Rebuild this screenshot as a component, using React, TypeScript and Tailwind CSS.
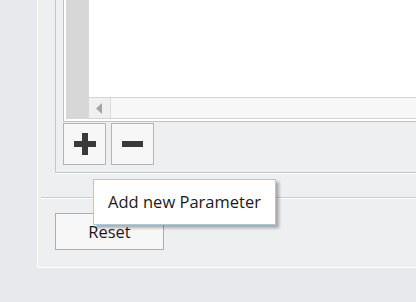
import React from 'react';

// Parameter-Editor Ausschnitt: Liste, +/- Buttons, Tooltip, Reset
export default function App() {
  const font = { fontFamily: '"Open Sans", "Noto Sans", sans-serif' };

  return (
    <div className="relative w-[416px] h-[302px] overflow-hidden bg-[#e8e9ec]" style={font}>
      {/* Panel */}
      <div className="ml-[37px] w-[379px] h-[268px] bg-[#eeeff1] border-l border-b border-white flex flex-col">
        {/* Group box */}
        <div className="ml-[17px] w-[400px] h-[173px] border-l border-b border-[#c6c6c6] flex flex-col pl-[7px]">
          {/* List box */}
          <div className="h-[122px] w-[400px] bg-white border-l border-b border-[#c2c2c2] flex pl-[2px] pb-[2px]">
            <div className="w-[23px] h-full bg-[#d7d7d7]" />
            <div className="flex-1 flex flex-col">
              <div className="flex-1 bg-white" />
              <div className="h-[22px] flex border-t border-b border-[#d4d4d4] bg-[#f7f7f7]">
                <div className="w-[22px] h-full bg-[#f0f0f0] border-r border-[#dadada] flex items-center justify-center">
                  <svg width="7" height="11" viewBox="0 0 7 11">
                    <polygon points="6,0 6,11 0,5.5" fill="#a4a4a4" />
                  </svg>
                </div>
                <div className="flex-1" />
              </div>
            </div>
          </div>
          {/* Toolbar */}
          <div className="flex gap-[5px] mt-[1px]">
            <button className="w-[43px] h-[42px] bg-[#f7f7f7] border border-[#b4b4b4] flex items-center justify-center">
              <svg width="22" height="22" viewBox="0 0 22 22">
                <rect x="8" y="0" width="6" height="22" fill="#3a3a3a" />
                <rect x="0" y="8" width="22" height="6" fill="#3a3a3a" />
              </svg>
            </button>
            <button className="w-[43px] h-[42px] bg-[#f7f7f7] border border-[#b4b4b4] flex items-center justify-center">
              <svg width="21" height="6" viewBox="0 0 21 6">
                <rect x="0" y="0" width="21" height="6" fill="#3a3a3a" />
              </svg>
            </button>
          </div>
        </div>
        <div className="h-px bg-white ml-[17px]" />

        {/* Separator */}
        <div className="mt-[23px] ml-[3px] h-px bg-[#cbcbcb]" />
        <div className="h-px bg-white ml-[3px]" />

        {/* Reset */}
        <div className="pl-[17px] mt-[14px]">
          <button className="w-[109px] h-[37px] bg-[#f7f7f7] border border-[#adadad] text-[16.5px] text-[#1a1a1a] leading-none pt-[1px]">
            Reset
          </button>
        </div>
      </div>

      {/* Tooltip */}
      <div className="absolute left-[93px] top-[179px] w-[183px] h-[46px] bg-white border border-[#a9cbe0] shadow-[3px_3px_3px_rgba(0,0,0,0.3)] flex items-center justify-center text-[16.5px] text-[#1a1a1a] leading-none">
        Add new Parameter
      </div>
    </div>
  );
}
